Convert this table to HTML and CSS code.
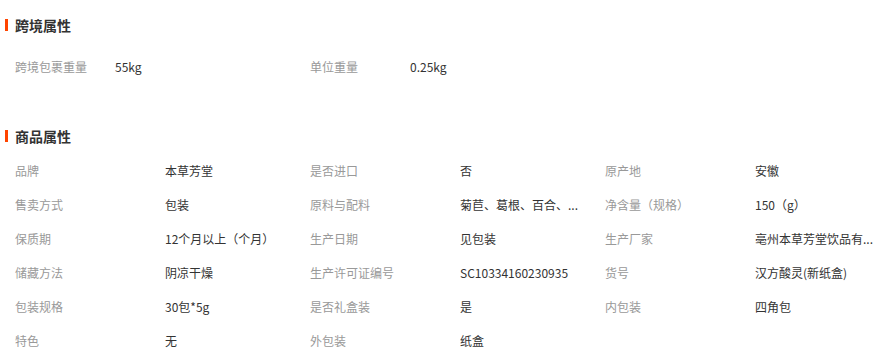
FILE: index.html
```html
<!DOCTYPE html>
<html lang="zh-CN">
<head>
<meta charset="utf-8">
<title>属性</title>
<link rel="stylesheet" href="styles.css">
</head>
<body>
<section class="sec sec-cross">
  <h2 class="title">跨境属性</h2>
  <ul class="grid grid-cross">
    <li class="item"><span class="label">跨境包裹重量</span><span class="value">55kg</span></li>
    <li class="item"><span class="label">单位重量</span><span class="value">0.25kg</span></li>
  </ul>
</section>
<section class="sec sec-prod">
  <h2 class="title">商品属性</h2>
  <ul class="grid grid-prod">
    <li class="item"><span class="label">品牌</span><span class="value">本草芳堂</span></li>
    <li class="item"><span class="label">是否进口</span><span class="value">否</span></li>
    <li class="item"><span class="label">原产地</span><span class="value">安徽</span></li>
    <li class="item"><span class="label">售卖方式</span><span class="value">包装</span></li>
    <li class="item"><span class="label">原料与配料</span><span class="value" title="菊苣、葛根、百合、栀子、桑叶">菊苣、葛根、百合、...</span></li>
    <li class="item"><span class="label">净含量（规格）</span><span class="value">150（g）</span></li>
    <li class="item"><span class="label">保质期</span><span class="value">12个月以上（个月）</span></li>
    <li class="item"><span class="label">生产日期</span><span class="value">见包装</span></li>
    <li class="item"><span class="label">生产厂家</span><span class="value" title="亳州本草芳堂饮品有限公司">亳州本草芳堂饮品有...</span></li>
    <li class="item"><span class="label">储藏方法</span><span class="value">阴凉干燥</span></li>
    <li class="item"><span class="label">生产许可证编号</span><span class="value">SC10334160230935</span></li>
    <li class="item"><span class="label">货号</span><span class="value">汉方酸灵(新纸盒)</span></li>
    <li class="item"><span class="label">包装规格</span><span class="value">30包*5g</span></li>
    <li class="item"><span class="label">是否礼盒装</span><span class="value">是</span></li>
    <li class="item"><span class="label">内包装</span><span class="value">四角包</span></li>
    <li class="item"><span class="label">特色</span><span class="value">无</span></li>
    <li class="item"><span class="label">外包装</span><span class="value">纸盒</span></li>
  </ul>
</section>
</body>
</html>
```
FILE: styles.css
```css
html, body {
  margin: 0;
  padding: 0;
  background: #fff;
}
body {
  font-family: "Noto Sans CJK SC", "Liberation Sans", sans-serif;
  font-size: 12px;
  color: #333;
  width: 886px;
  overflow: hidden;
}
.sec-cross {
  padding-top: 15px;
}
.sec-prod {
  margin-top: 42px;
}
.title {
  margin: 0;
  height: 20px;
  line-height: 20px;
  font-size: 14px;
  font-weight: bold;
  color: #333;
  display: flex;
  align-items: center;
  gap: 7px;
  padding-left: 5px;
}
.title::before {
  content: "";
  display: block;
  width: 3px;
  height: 12px;
  background: #ff4400;
}
.grid {
  list-style: none;
  margin: 0;
  padding: 0;
  display: grid;
  grid-template-columns: repeat(3, 295px);
}
.grid-cross {
  margin-top: 15px;
}
.grid-prod {
  margin-top: 8px;
}
.item {
  display: flex;
  height: 34px;
  line-height: 34px;
  padding-left: 15px;
  white-space: nowrap;
}
.label {
  color: #999;
  flex: 0 0 150px;
}
.grid-cross .label {
  flex-basis: 100px;
}
.value {
  color: #333;
}
```
